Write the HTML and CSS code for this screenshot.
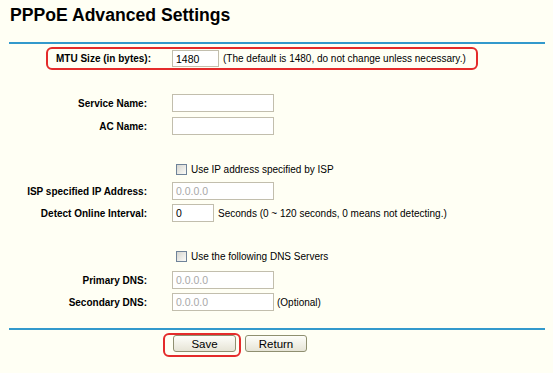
FILE: index.html
```html
<!DOCTYPE html>
<html>
<head>
<meta charset="utf-8">
<title>PPPoE Advanced Settings</title>
<link rel="stylesheet" href="styles.css">
</head>
<body>
<h1 class="title">PPPoE Advanced Settings</h1>
<div class="rule"></div>

<div class="mtu-box">
  <span class="mtu-label">MTU Size (in bytes):</span>
  <span class="field w-mtu">1480</span>
  <span class="hint">(The default is 1480, do not change unless necessary.)</span>
</div>

<div class="sec sec-names">
  <div class="row"><span class="label">Service Name:</span><span class="field w-name"></span></div>
  <div class="row gap1"><span class="label">AC Name:</span><span class="field w-name"></span></div>
</div>

<div class="sec sec-ip">
  <div class="row check-row"><span class="check"></span><span>Use IP address specified by ISP</span></div>
  <div class="row"><span class="label">ISP specified IP Address:</span><span class="field w-ip off">0.0.0.0</span></div>
  <div class="row"><span class="label">Detect Online Interval:</span><span class="field w-int">0</span><span class="hint">Seconds (0 ~ 120 seconds, 0 means not detecting.)</span></div>
</div>

<div class="sec sec-dns">
  <div class="row check-row"><span class="check"></span><span>Use the following DNS Servers</span></div>
  <div class="row gap2"><span class="label">Primary DNS:</span><span class="field w-ip off">0.0.0.0</span></div>
  <div class="row"><span class="label">Secondary DNS:</span><span class="field w-ip off">0.0.0.0</span><span class="hint opt">(Optional)</span></div>
</div>

<div class="rule rule-bottom"></div>

<div class="actions">
  <div class="mark"><button class="btn btn-save">Save</button></div>
  <button class="btn btn-return">Return</button>
</div>
</body>
</html>
```

FILE: styles.css
```css
* { box-sizing: border-box; }

body {
  margin: 0;
  background: #fffff4;
  font-family: "Liberation Sans", Arial, sans-serif;
  font-size: 10px;
  color: #000;
}

.title {
  margin: 0;
  padding: 4px 0 0 10px;
  font-size: 17.6px;
  line-height: 22px;
  font-weight: bold;
  color: #000;
}

.rule {
  height: 2px;
  background: #3399cc;
  margin: 16px 8px 0 9px;
}

.rule-bottom { margin-top: 15px; }

.mtu-box {
  margin: 3px 0 0 46px;
  width: 432px;
  height: 23px;
  border: 2px solid #e42b2b;
  border-radius: 6px;
  display: flex;
  align-items: center;
}

.mtu-label {
  width: 124px;
  padding-left: 8px;
  font-weight: bold;
}

.field {
  display: flex;
  align-items: center;
  height: 18px;
  border: 1px solid #c2bead;
  background: #fff;
  padding-left: 3px;
  font-size: 10.5px;
  color: #000;
}

.field.off { color: #a8a8a8; }

.w-mtu { width: 47px; height: 17px; }
.w-name { width: 102px; }
.w-ip { width: 102px; }
.w-int { width: 42px; }

.hint { margin-left: 4px; }
.opt { margin-left: 3px; }

.sec-names { margin-top: 22px; }
.sec-ip { margin-top: 21px; }
.sec-dns { margin-top: 21px; }

.row {
  display: flex;
  align-items: center;
  height: 22px;
}

.gap1 { margin-top: 1px; }
.gap2 { margin-top: 2px; }

.label {
  width: 147px;
  margin-right: 25px;
  text-align: right;
  font-weight: bold;
}

.check-row { padding-left: 176px; }

.check {
  width: 11px;
  height: 11px;
  margin-right: 4px;
  border: 1px solid #6f8399;
  background: linear-gradient(135deg, #d6d6d0, #fbfbf8);
}

.actions {
  display: flex;
  align-items: flex-start;
  margin: 3px 0 0 163px;
}

.mark {
  border: 2px solid #e42b2b;
  border-radius: 6px;
  padding: 0 3px 3px 8px;
}

.btn {
  display: flex;
  align-items: center;
  justify-content: center;
  height: 17px;
  padding: 0;
  border: 1px solid #8f8f70;
  border-radius: 3px;
  background: linear-gradient(#fefefa, #e6e4d6);
  font-family: "Liberation Sans", Arial, sans-serif;
  font-size: 11.5px;
  color: #000;
}

.btn-save { width: 63px; }
.btn-return { width: 62px; margin: 2px 0 0 4px; }
```
